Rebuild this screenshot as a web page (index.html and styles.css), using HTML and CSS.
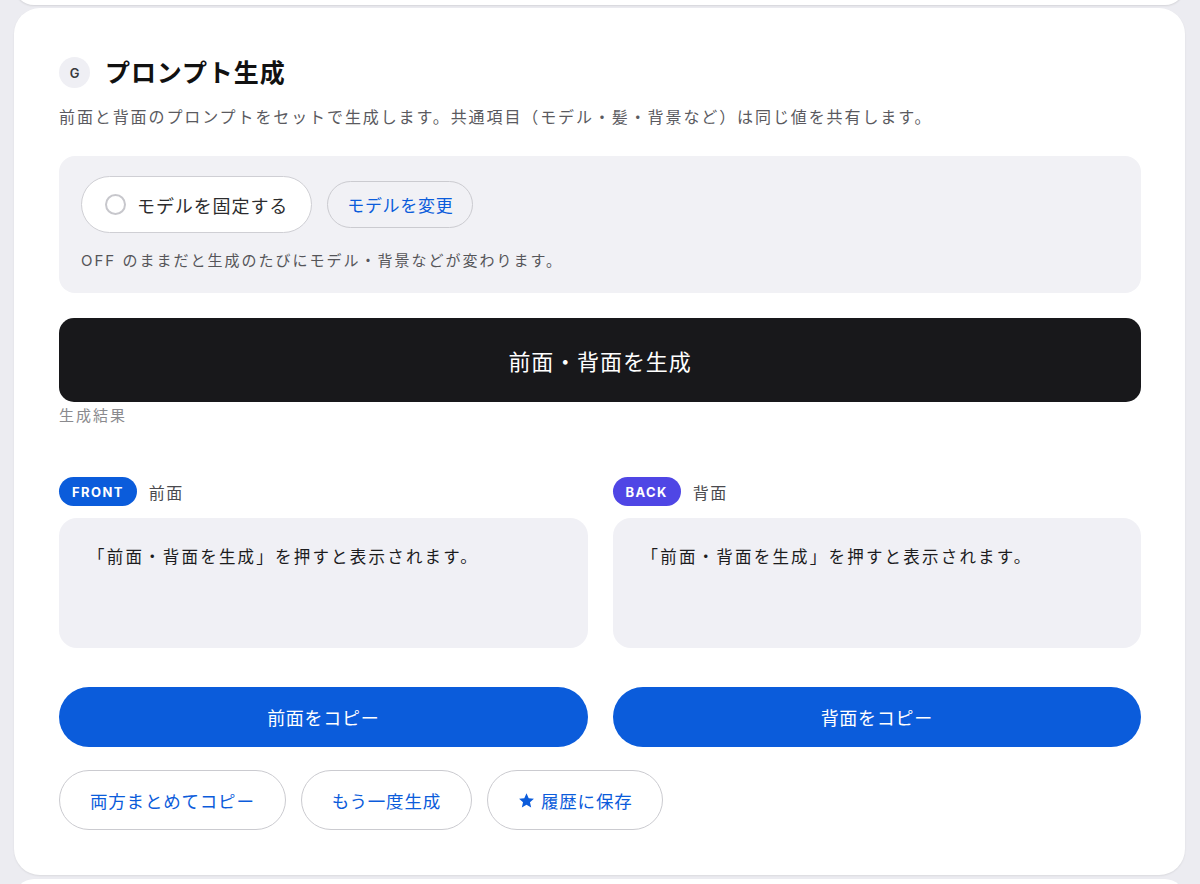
FILE: index.html
```html
<!DOCTYPE html>
<html lang="ja">
<head>
    <meta charset="UTF-8">
    <meta name="viewport" content="width=device-width, initial-scale=1.0">
    <title>プロンプト生成</title>
    <link rel="stylesheet" href="styles.css">
</head>
<body>
    <div class="card card-prev"></div>

    <section class="card">
        <div class="card-head">
            <span class="step">G</span>
            <h2>プロンプト生成</h2>
        </div>
        <p class="lead">前面と背面のプロンプトをセットで生成します。共通項目（モデル・髪・背景など）は同じ値を共有します。</p>

        <div class="panel">
            <div class="panel-row">
                <label class="toggle">
                    <span class="radio"></span>
                    モデルを固定する
                </label>
                <button class="btn-outline btn-small">モデルを変更</button>
            </div>
            <p class="note">OFF のままだと生成のたびにモデル・背景などが変わります。</p>
        </div>

        <button class="btn-generate">前面・背面を生成</button>
        <div class="result-label">生成結果</div>

        <div class="result-grid">
            <div class="result-col">
                <div class="result-head">
                    <span class="badge front">FRONT</span>
                    <span class="result-name">前面</span>
                </div>
                <div class="result-box">「前面・背面を生成」を押すと表示されます。</div>
            </div>
            <div class="result-col">
                <div class="result-head">
                    <span class="badge back">BACK</span>
                    <span class="result-name">背面</span>
                </div>
                <div class="result-box">「前面・背面を生成」を押すと表示されます。</div>
            </div>
        </div>

        <div class="copy-grid">
            <button class="btn-primary">前面をコピー</button>
            <button class="btn-primary">背面をコピー</button>
        </div>

        <div class="actions">
            <button class="btn-outline">両方まとめてコピー</button>
            <button class="btn-outline">もう一度生成</button>
            <button class="btn-outline">
                <svg class="star" viewBox="0 0 24 24" width="17" height="17"><path d="M12 1.8l3.1 6.9 7.4.7-5.6 5 1.7 7.4L12 18l-6.6 3.8 1.7-7.4-5.6-5 7.4-.7z"/></svg>
                履歴に保存
            </button>
        </div>
    </section>

    <div class="card card-next"></div>
</body>
</html>
```

FILE: styles.css
```css
* {
    box-sizing: border-box;
}

body {
    margin: 0;
    padding: 0 15px 0 14px;
    background: #ececf1;
    font-family: Inter, "Noto Sans CJK JP", sans-serif;
    color: #1c1c1e;
    overflow: hidden;
}

.card {
    background: #fff;
    border-radius: 26px;
    box-shadow: 0 1px 2px rgba(0, 0, 0, 0.08);
    padding: 49px 44px 45px 45px;
    margin-top: 3px;
}

.card-prev {
    height: 40px;
    margin-top: -35px;
    padding: 0;
    box-shadow: 0 1px 2px rgba(0, 0, 0, 0.1);
}

.card-next {
    height: 40px;
    margin-top: 4px;
    padding: 0;
}

.card-head {
    display: flex;
    align-items: center;
    gap: 15px;
}

.step {
    width: 31px;
    height: 31px;
    border-radius: 50%;
    background: #efeff4;
    color: #3a3a3c;
    font-size: 13px;
    font-weight: 600;
    display: flex;
    align-items: center;
    justify-content: center;
}

.card-head h2 {
    margin: 0;
    font-size: 25px;
    line-height: 30px;
    font-weight: 700;
    letter-spacing: 0.9px;
    color: #111;
}

.lead {
    margin: 18px 0 0;
    font-size: 16px;
    line-height: 22px;
    letter-spacing: 1.9px;
    color: #5a5a60;
}

.panel {
    margin-top: 28px;
    background: #f1f1f5;
    border-radius: 16px;
    padding: 20px 22px 21px;
}

.panel-row {
    display: flex;
    align-items: center;
    gap: 15px;
}

.toggle {
    display: flex;
    align-items: center;
    gap: 11px;
    height: 57px;
    padding: 0 23px;
    background: #fff;
    border: 1px solid #cfcfd4;
    border-radius: 29px;
    font-size: 18px;
    letter-spacing: 0.9px;
    color: #2c2c2e;
}

.radio {
    width: 21px;
    height: 21px;
    border-radius: 50%;
    border: 2px solid #c7c7cc;
    background: #fff;
}

button {
    font-family: inherit;
    cursor: pointer;
}

.btn-outline {
    display: inline-flex;
    align-items: center;
    gap: 6px;
    height: 60px;
    padding: 0 30px;
    background: #fff;
    border: 1px solid #cbcbd0;
    border-radius: 30px;
    font-size: 17.5px;
    letter-spacing: 0.8px;
    color: #0b5cdb;
}

.btn-small {
    height: 47px;
    padding: 0 19px;
    background: #f1f1f5;
    border-radius: 24px;
    font-size: 17px;
    letter-spacing: 0.7px;
}

.note {
    margin: 17px 0 0;
    font-size: 15px;
    line-height: 22px;
    letter-spacing: 2px;
    color: #555559;
}

.btn-generate {
    display: block;
    width: 100%;
    height: 84px;
    margin-top: 25px;
    border: none;
    border-radius: 15px;
    background: #18181b;
    color: #fff;
    font-size: 22px;
    letter-spacing: 0.9px;
}

.result-label {
    margin-top: 3px;
    font-size: 15px;
    line-height: 22px;
    letter-spacing: 2px;
    color: #8a8a8e;
}

.result-grid,
.copy-grid {
    display: grid;
    grid-template-columns: 1fr 1fr;
    gap: 25px;
}

.result-grid {
    margin-top: 50px;
}

.result-head {
    display: flex;
    align-items: center;
    gap: 12px;
}

.badge {
    height: 29px;
    padding: 0 13px;
    border-radius: 15px;
    display: inline-flex;
    align-items: center;
    font-size: 13px;
    font-weight: 700;
    letter-spacing: 1.4px;
    color: #fff;
}

.badge.front {
    background: #0b5cdb;
}

.badge.back {
    background: #4f46e5;
}

.result-name {
    font-size: 16px;
    letter-spacing: 1.5px;
    color: #4a4a4e;
}

.result-box {
    margin-top: 12px;
    height: 130px;
    padding: 27px 29px;
    background: #f0f0f5;
    border-radius: 18px;
    font-size: 16.5px;
    line-height: 24px;
    letter-spacing: 2.2px;
    color: #1c1c1e;
}

.copy-grid {
    margin-top: 39px;
}

.btn-primary {
    height: 60px;
    border: none;
    border-radius: 30px;
    background: #0b5cdb;
    color: #fff;
    font-size: 18px;
    letter-spacing: 0.7px;
}

.actions {
    display: flex;
    gap: 15px;
    margin-top: 23px;
}

.star {
    fill: #0b5cdb;
}
```
